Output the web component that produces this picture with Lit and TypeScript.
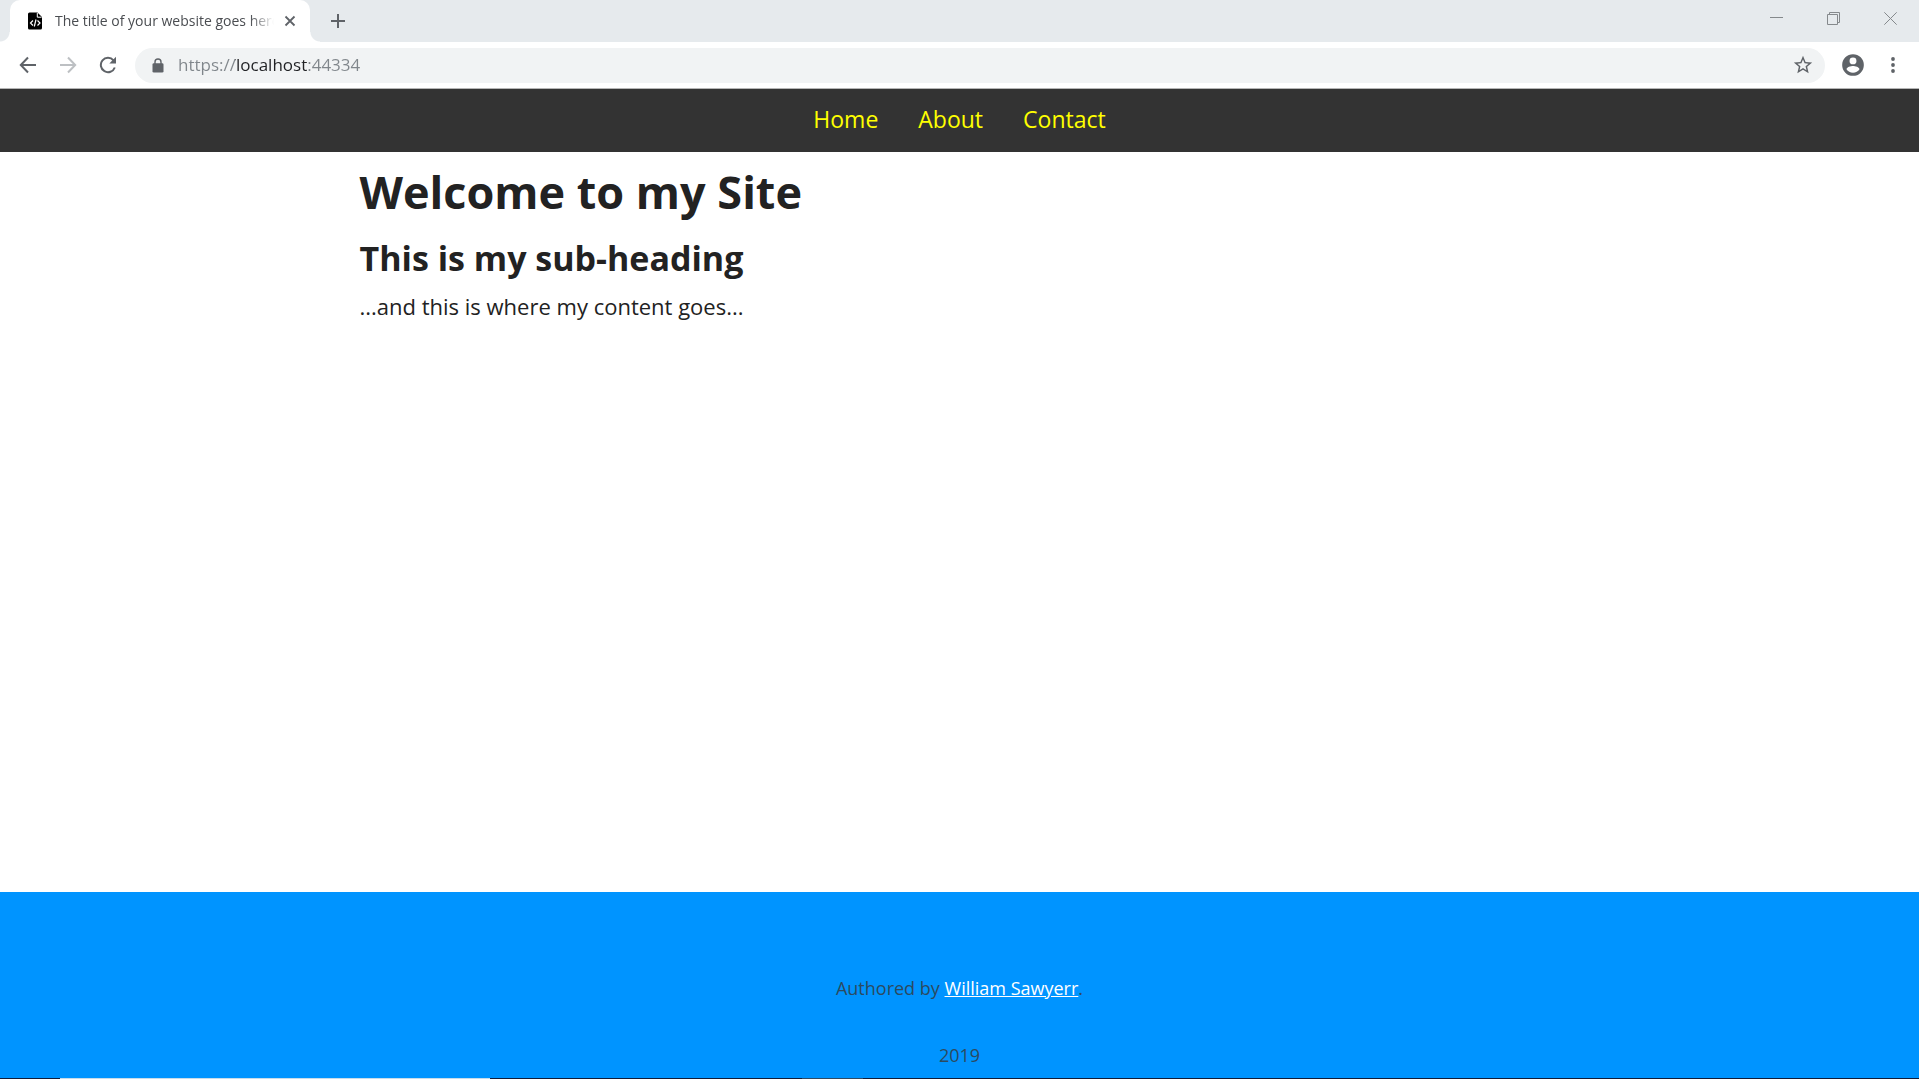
import { LitElement, html, css } from "lit";
import { customElement, state } from "lit/decorators.js";

@customElement("browser-chrome")
class BrowserChrome extends LitElement {
  static styles = css`
    :host {
      display: block;
      font-family: "Open Sans", "Noto Sans", sans-serif;
    }
    button {
      display: grid;
      place-items: center;
      padding: 0;
      border: 0;
      background: none;
      color: #5f6368;
    }
    svg {
      display: block;
    }
    .strip {
      display: flex;
      height: 42px;
      padding-left: 10px;
      background: #e6eaed;
    }
    .tab {
      position: relative;
      display: flex;
      align-items: center;
      box-sizing: border-box;
      width: 300px;
      padding: 0 10px 0 18px;
      border-radius: 10px 10px 0 0;
      background: #fff;
    }
    .tab::before,
    .tab::after {
      content: "";
      position: absolute;
      bottom: 0;
      width: 10px;
      height: 10px;
    }
    .tab::before {
      right: 100%;
      background: radial-gradient(circle at 0 0, #e6eaed 9px, #fff 10px);
    }
    .tab::after {
      left: 100%;
      background: radial-gradient(circle at 100% 0, #e6eaed 9px, #fff 10px);
    }
    .title {
      flex: 1;
      margin: 0 6px 0 13px;
      overflow: hidden;
      white-space: nowrap;
      font-size: 14px;
      line-height: 20px;
      color: #4a4d51;
      mask-image: linear-gradient(to left, transparent, #000 24px);
    }
    .close {
      width: 20px;
      height: 20px;
    }
    .new-tab {
      width: 36px;
      margin-left: 10px;
    }
    .window {
      display: flex;
      height: 37px;
      margin-left: auto;
    }
    .window button {
      width: 57px;
      color: #85898c;
    }
    .toolbar {
      display: flex;
      align-items: center;
      height: 46px;
      padding: 0 6px 0 8px;
      border-bottom: 1px solid #b5b5b5;
      background: #fff;
    }
    .toolbar button {
      width: 40px;
      height: 36px;
    }
    .toolbar .off {
      color: #bdc0c3;
    }
    .address {
      display: flex;
      flex: 1;
      align-items: center;
      height: 35px;
      margin: 0 8px 0 7px;
      padding-left: 17px;
      border-radius: 18px;
      background: #f1f3f4;
    }
    .url {
      flex: 1;
      min-width: 0;
      margin-left: 14px;
      padding: 0;
      border: 0;
      outline: 0;
      background: linear-gradient(
        to right,
        #80868b 57px,
        #202124 57px,
        #202124 129px,
        #80868b 129px
      );
      background-clip: text;
      -webkit-background-clip: text;
      color: transparent;
      caret-color: #202124;
      font: 17px/24px "Open Sans", "Noto Sans", sans-serif;
    }
    .toolbar .star {
      width: 44px;
    }
  `;

  @state() private url = "https://localhost:44334";

  render() {
    return html`
      <div class="strip">
        <div class="tab">
          <svg width="14" height="18" viewBox="0 0 14 18">
            <path d="M1.500 .5H9.500L14 5V16a1.500 1.500 0 0 1-1.500 1.500H1.500A1.500 1.500 0 0 1 0 16V2A1.500 1.500 0 0 1 1.500 .5Z" fill="#000" />
            <path d="M9.300 1V5.200H13.600" fill="none" stroke="#fff" />
            <path d="M5 8.500 2.500 11 5 13.500M9.500 8.500 12 11 9.500 13.500M8 7.500 6.300 14.500" fill="none" stroke="#fff" stroke-width="1.200" />
          </svg>
          <span class="title">The title of your website goes here</span>
          <button class="close" aria-label="Close tab">
            <svg width="12" height="12" viewBox="0 0 12 12" fill="none" stroke="currentColor" stroke-width="1.800">
              <path d="M1.500 1.500 10.500 10.500M10.500 1.500 1.500 10.500" />
            </svg>
          </button>
        </div>
        <button class="new-tab" aria-label="New tab">
          <svg width="16" height="16" viewBox="0 0 16 16" fill="none" stroke="currentColor" stroke-width="2">
            <path d="M8 1V15M1 8H15" />
          </svg>
        </button>
        <div class="window">
          <button aria-label="Minimise">
            <svg width="13" height="13" viewBox="0 0 13 13" stroke="currentColor"><path d="M0 5.500H13" /></svg>
          </button>
          <button aria-label="Restore">
            <svg width="13" height="13" viewBox="0 0 13 13" fill="none" stroke="currentColor">
              <path d="M.5 2.500H10.500V12.500H.5ZM2.500 2.500V.5H12.500V10.500H10.500" />
            </svg>
          </button>
          <button aria-label="Close window">
            <svg width="13" height="13" viewBox="0 0 13 13" stroke="currentColor"><path d="M.3.3 12.700 12.700M12.700.3.3 12.700" /></svg>
          </button>
        </div>
      </div>
      <div class="toolbar">
        <button aria-label="Back">
          <svg width="18" height="18" viewBox="0 0 18 18" fill="none" stroke="currentColor" stroke-width="2">
            <path d="M17 9H2.500M9 1.500 1.800 9 9 16.500" />
          </svg>
        </button>
        <button class="off" aria-label="Forward">
          <svg width="18" height="18" viewBox="0 0 18 18" fill="none" stroke="currentColor" stroke-width="2">
            <path d="M1 9H15.500M9 1.500 16.200 9 9 16.500" />
          </svg>
        </button>
        <button aria-label="Reload">
          <svg width="18" height="18" viewBox="0 0 18 18">
            <path d="M15.800 11.500A7.200 7.200 0 1 1 14.500 4.300" fill="none" stroke="currentColor" stroke-width="2" />
            <path d="M17 .8V7.500H10.300Z" fill="currentColor" />
          </svg>
        </button>
        <div class="address">
          <svg width="12" height="15" viewBox="0 0 12 15">
            <rect x=".5" y="5.200" width="11" height="9.300" rx="1.300" fill="#5f6368" />
            <path d="M3 6V4a3 3 0 0 1 6 0V6" fill="none" stroke="#5f6368" stroke-width="1.400" />
          </svg>
          <input
            class="url"
            type="text"
            aria-label="Address"
            spellcheck="false"
            .value=${this.url}
            @input=${(e: Event) => (this.url = (e.target as HTMLInputElement).value)}
          />
          <button class="star" aria-label="Bookmark this page">
            <svg width="22" height="22" viewBox="0 0 24 24" fill="currentColor">
              <path d="M22 9.240l-7.190-.62L12 2 9.190 8.630 2 9.240l5.460 4.730L5.820 21 12 17.270 18.180 21l-1.630-7.030L22 9.240zM12 15.400l-3.760 2.270 1-4.280-3.320-2.880 4.380-.38L12 6.100l1.710 4.040 4.380.38-3.320 2.880 1 4.280L12 15.400z" />
            </svg>
          </button>
        </div>
        <button aria-label="Profile">
          <svg width="26" height="26" viewBox="0 0 24 24" fill="currentColor">
            <path fill-rule="evenodd" d="M12 2a10 10 0 1 0 0 20 10 10 0 0 0 0-20ZM12 5a3.200 3.200 0 1 1 0 6.400A3.200 3.200 0 0 1 12 5ZM12 19.200c-2.500 0-4.700-1.280-6-3.220.030-1.990 4-3.080 6-3.080s5.970 1.090 6 3.080c-1.290 1.940-3.500 3.220-6 3.220Z" />
          </svg>
        </button>
        <button aria-label="Menu">
          <svg width="4" height="16" viewBox="0 0 4 16" fill="currentColor">
            <circle cx="2" cy="2" r="1.900" /><circle cx="2" cy="8" r="1.900" /><circle cx="2" cy="14" r="1.900" />
          </svg>
        </button>
      </div>
    `;
  }
}

@customElement("site-page")
class SitePage extends LitElement {
  static styles = css`
    :host {
      display: flex;
      flex-direction: column;
      font-family: "Open Sans", "Noto Sans", sans-serif;
      color: #222;
    }
    nav {
      display: flex;
      justify-content: center;
      gap: 40px;
      padding: 14px 0 17px;
      background: #333;
      font-size: 23px;
      line-height: 32px;
    }
    nav a {
      color: #ff0;
      text-decoration: none;
    }
    main {
      flex: 1;
      box-sizing: border-box;
      width: 100%;
      max-width: 1200px;
      margin: 0 auto;
    }
    h1,
    h2,
    p {
      margin: 0;
    }
    h1 {
      padding: 8px 0;
      font-size: 45px;
      line-height: 64px;
    }
    h2 {
      font-size: 34px;
      line-height: 52px;
    }
    main p {
      padding-top: 6px;
      font-size: 22px;
      line-height: 32px;
    }
    footer {
      display: grid;
      gap: 40px;
      padding: 83px 0 9px;
      background: #0094ff;
      text-align: center;
      font-size: 18px;
      line-height: 27px;
      color: #2c4a60;
    }
    footer a {
      color: #fff;
    }
  `;

  render() {
    return html`
      <nav>
        <a href="#home">Home</a>
        <a href="#about">About</a>
        <a href="#contact">Contact</a>
      </nav>
      <main>
        <h1>Welcome to my Site</h1>
        <h2>This is my sub-heading</h2>
        <p>...and this is where my content goes...</p>
      </main>
      <footer>
        <p>Authored by <a href="#author">William Sawyerr</a>.</p>
        <p>2019</p>
      </footer>
    `;
  }
}

@customElement("app-root")
class AppRoot extends LitElement {
  static styles = css`
    :host {
      display: flex;
      flex-direction: column;
      min-height: 100vh;
      background: #fff;
    }
    site-page {
      flex: 1;
    }
    .taskbar {
      display: flex;
      height: 1px;
      padding-left: 60px;
      background: #101c38;
    }
    .search {
      width: 430px;
      background: #c9dcea;
    }
    .active {
      width: 61px;
      margin-left: 312px;
      background: #2f4a63;
    }
  `;

  render() {
    return html`
      <browser-chrome></browser-chrome>
      <site-page></site-page>
      <div class="taskbar">
        <div class="search"></div>
        <div class="active"></div>
      </div>
    `;
  }
}
